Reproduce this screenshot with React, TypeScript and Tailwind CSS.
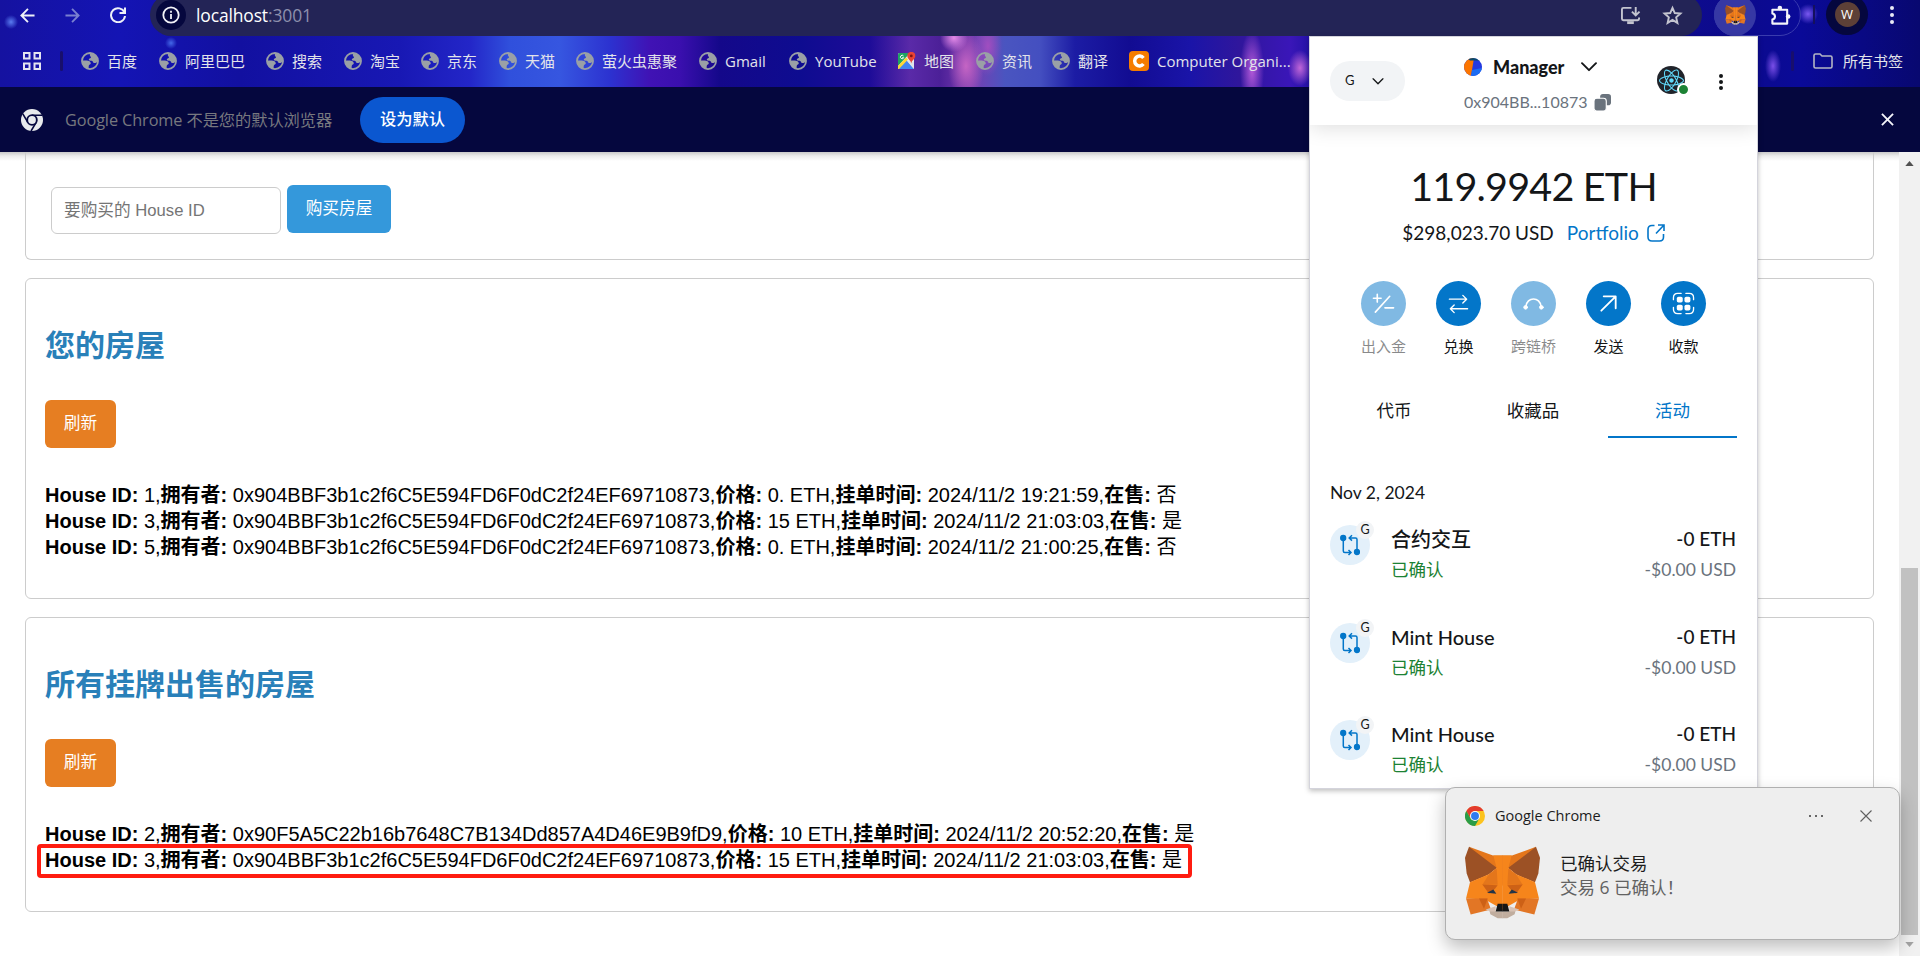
import React from "react";
import { FaReact } from "react-icons/fa";

const UI = "font-['Open_Sans','Noto_Sans_CJK_SC',sans-serif]";
const ARIAL = "font-['Liberation_Sans','Noto_Sans_CJK_SC',sans-serif]";
const GEO = "font-['Lato','Noto_Sans_CJK_SC',sans-serif]";

function Globe() {
  return (
    <svg viewBox="0 0 24 24" className="h-[18px] w-[18px] shrink-0" fill="#9aa0a6">
      <circle cx="12" cy="12" r="10.7" fill="none" stroke="#9aa0a6" strokeWidth="2.4" />
      <path d="M12 1.5C18 1.5 22.6 6 22.6 12c-1.600 2.600-3.600 3.200-5.400 2.600-1.700-.5-1-2.600-2.800-3-2-.3-4 .2-4-1.700 0-1.700 2.600-1 3-2.500.3-1.600-2.500-1.500-1.400-5.900z" />
      <path d="M1.500 11.200h6c3 0 5.600 1.600 5.600 3.800 0 2-2.600 1.600-2.800 3.600l-.3 3.900C5 21.500 1.500 17 1.500 11.200z" />
    </svg>
  );
}

function MapsIcon() {
  return (
    <svg viewBox="0 0 18 18" className="h-[18px] w-[18px] shrink-0">
      <rect x="0" y="1" width="16" height="16" rx="1.500" fill="#e8eaed" />
      <path d="M0 2.500Q0 1 1.500 1H12L0 14z" fill="#1fa463" />
      <path d="M0 17 8.500 8 16 17z" fill="#4285f4" />
      <path d="M0 14 8 5.500l2 2L1 17H0z" fill="#fdd835" />
      <path d="M9 9l7 8V10z" fill="#dfe3e8" />
      <path d="M13.300 11.500C13 8 9.300 7 9.300 3.900a4 4 0 0 1 8 0C17.300 7 13.600 8 13.300 11.500z" fill="#ea4335" />
      <circle cx="13.300" cy="3.900" r="1.400" fill="#811411" />
      <path d="M5.500 4a1.700 1.700 0 1 0 .2 1.700H4.200" fill="none" stroke="#fff" strokeWidth="1" />
    </svg>
  );
}

function Fox({ className }: { className: string }) {
  const half = (
    <g>
      <polygon points="12,2 84,28 113,28 113,120 95,66 60,90 15,108 30,60" fill="#e4761b" />
      <polygon points="12,2 95,65 72,84 15,108 5,82 0,35" fill="#9c5125" />
      <polygon points="15,108 72,84 95,66 85,28 113,28 113,190 60,160 3,157" fill="#f6851b" />
      <polygon points="95,66 72,84 52,116 98,116" fill="#e4761b" />
      <polygon points="52,115 98,117 90,128 72,143" fill="#cd6116" />
      <polygon points="3,157 66,157 78,190 17,205" fill="#e27625" />
      <polygon points="42,157 68,157 57,188" fill="#cd6116" />
      <polygon points="66,140 85,130 94,143" fill="#233447" />
      <polygon points="72,188 94,196 113,196 113,216 98,216 76,204" fill="#c0ad9e" />
      <polygon points="62,190 92,180 92,196 76,196" fill="#d7c1b3" />
      <polygon points="98,173 113,173 113,196 92,196" fill="#161616" />
    </g>
  );
  return (
    <svg viewBox="0 0 225 218" className={className}>
      {half}
      <g transform="translate(225 0) scale(-1 1)">{half}</g>
    </svg>
  );
}

function ChromeColor() {
  return (
    <svg viewBox="0 0 48 48" className="h-[20px] w-[20px]">
      <circle cx="24" cy="24" r="24" fill="#fcc31e" />
      <path d="M3.200 12A24 24 0 0 1 44.800 12H24L13.600 30z" fill="#e33b2e" />
      <path d="M3.200 12A24 24 0 0 0 24 48L34.400 30H13.600z" fill="#2a9c47" />
      <circle cx="24" cy="24" r="12" fill="#fff" />
      <circle cx="24" cy="24" r="9.500" fill="#2f7bf0" />
    </svg>
  );
}

function ChromeMono() {
  return (
    <svg viewBox="0 0 48 48" className="h-[22px] w-[22px]">
      <circle cx="24" cy="24" r="24" fill="#e8eaed" />
      <path d="M24 13.500H46M14.900 29.200 4 10.500M33.100 29.200 22 48" stroke="#05073e" strokeWidth="3.500" />
      <circle cx="24" cy="24" r="12.500" fill="#05073e" />
      <circle cx="24" cy="24" r="8.500" fill="#e8eaed" />
    </svg>
  );
}

const bookmarks: { label: string; width: string; kind?: string; tracking?: string }[] = [
  { label: "百度", width: "w-[78px]" },
  { label: "阿里巴巴", width: "w-[107px]" },
  { label: "搜索", width: "w-[78px]" },
  { label: "淘宝", width: "w-[77px]" },
  { label: "京东", width: "w-[78px]" },
  { label: "天猫", width: "w-[77px]" },
  { label: "萤火虫惠聚", width: "w-[123px]" },
  { label: "Gmail", width: "w-[90px]" },
  { label: "YouTube", width: "w-[109px]" },
  { label: "地图", width: "w-[78px]", kind: "maps" },
  { label: "资讯", width: "w-[76px]" },
  { label: "翻译", width: "w-[77px]" },
  { label: "Computer Organi...", width: "w-[180px]", kind: "c" },
];

function BrowserBar() {
  return (
    <header
      className={`${UI} h-[87px] shrink-0 overflow-hidden bg-[radial-gradient(circle_at_11px_22px,#5a7cf0_0,transparent_7px),radial-gradient(circle_at_171px_43px,#4468e8_0,transparent_6px),radial-gradient(circle_at_954px_38px,#e58be8_0,transparent_14px),radial-gradient(ellipse_18px_34px_at_966px_66px,#c565c4_0,transparent_100%),radial-gradient(ellipse_14px_30px_at_988px_46px,#a14ec0_0,transparent_100%),radial-gradient(ellipse_12px_40px_at_1252px_70px,#b45ad8_0,transparent_100%),radial-gradient(ellipse_12px_18px_at_1300px_68px,#c066d8_0,transparent_100%),radial-gradient(circle_at_1808px_14px,#7a58f0_0,transparent_10px),radial-gradient(ellipse_8px_16px_at_1773px_66px,#7a4fe8_0,transparent_100%),linear-gradient(90deg,#1512a0_0,#1414b4_120px,#1210a0_240px,#1818b4_400px,#2326c8_470px,#3050dc_510px,#3656e0_560px,#2c32d0_610px,#4012b4_650px,#3a0fae_680px,#14088a_720px,#0e0c90_800px,#1e0c98_870px,#5a2aa8_910px,#4c2098_940px,#7a3cb0_970px,#4a55c0_1005px,#444fc0_1040px,#1c1ca4_1075px,#120c92_1130px,#1a14a8_1190px,#30169c_1240px,#3a16b8_1290px,#1a10a0_1320px,#0c0a8c_1740px,#0a0a98_1800px,#080870_1920px)]`}
    >
      <div className="flex h-9 items-start">
        <div className="flex h-[30px] w-[150px] shrink-0 items-center pl-5">
          <svg viewBox="0 0 16 16" className="h-[15px] w-[15px]" fill="none" stroke="#eef0f8" strokeWidth="2">
            <path d="M15.500 8H1.500M8.500 1 1.500 8l7 7" />
          </svg>
          <svg viewBox="0 0 16 16" className="ml-[30px] h-[15px] w-[15px]" fill="none" stroke="#7a80d0" strokeWidth="2">
            <path d="M.5 8h14M7.500 1l7 7-7 7" />
          </svg>
          <svg viewBox="0 0 16 16" className="ml-[30px] h-4 w-4" fill="none" stroke="#eef0f8" strokeWidth="2">
            <path d="M14.500 5.500A7 7 0 1 0 15 9M15 .5v5.500H9.500" />
          </svg>
        </div>
        <div className="-mt-[6px] flex h-[42px] w-[1552px] shrink-0 items-center rounded-full bg-[#232456] pl-[6px]">
          <span className="flex h-[30px] w-[30px] items-center justify-center rounded-full bg-[#05073e]">
            <svg viewBox="0 0 18 18" className="h-[18px] w-[18px]" fill="none" stroke="#f2f2f8" strokeWidth="1.800">
              <circle cx="9" cy="9" r="7.700" />
              <path d="M9 8v5M9 4.800v1.900" />
            </svg>
          </span>
          <span className="ml-[10px] text-[17.500px] leading-6 tracking-[-0.15px] text-white">
            localhost<span className="text-[#8d8fac]">:3001</span>
          </span>
          <svg viewBox="0 0 22 20" className="ml-auto mr-[21px] h-[19px] w-[21px]" fill="none" stroke="#c3c4cf" strokeWidth="2">
            <path d="M12 2H3.500Q2 2 2 3.500v10Q2 15 3.500 15h15q1.500 0 1.500-1.500V12M16.500 1v8.500M12.500 6l4 4 4-4" />
            <path d="M7.500 17.500h7" strokeWidth="3" />
          </svg>
          <svg viewBox="0 0 24 24" className="mr-[19px] h-[21px] w-[21px]" fill="none" stroke="#c3c4cf" strokeWidth="2.200">
            <path d="M12 3.200l2.600 6 6.500.6-4.900 4.300 1.400 6.400-5.600-3.400-5.600 3.400 1.400-6.400-4.900-4.300 6.500-.6z" />
          </svg>
        </div>
        <div className="-mt-[6px] ml-3 flex h-[42px] w-[87px] shrink-0 items-center rounded-full border border-[#3a3cae]">
          <span className="-ml-px flex h-[42px] w-[42px] items-center justify-center rounded-full bg-[#3638a4]">
            <Fox className="h-5 w-[21px]" />
          </span>
          <svg viewBox="0 0 21 22" className="ml-[14px] h-[21px] w-[21px] shrink-0" fill="#f4f4fa">
            <path
              d="M2 5h15.500v14.500H2v-4.200c3.600-.8 3.600-5.600 0-6.300z"
              fill="none"
              stroke="#f4f4fa"
              strokeWidth="2.200"
              strokeLinejoin="round"
            />
            <circle cx="9.800" cy="3.200" r="2.400" />
            <circle cx="18.500" cy="12" r="2.400" />
          </svg>
        </div>
        <div className="ml-3 mt-[5px] h-[19px] w-[2px] bg-[#14105e]" />
        <div className="-mt-[6px] ml-[11px] flex h-[41px] w-[42px] shrink-0 items-center justify-center rounded-full bg-[#05073e]">
          <span className="flex h-[25px] w-[25px] items-center justify-center rounded-full bg-[#5d4037] text-[13px] leading-none text-white">
            W
          </span>
        </div>
        <div className="ml-[22px] mt-[6px] flex flex-col gap-[3px]">
          <i className="h-1 w-1 rounded-full bg-[#e8eaf6]" />
          <i className="h-1 w-1 rounded-full bg-[#e8eaf6]" />
          <i className="h-1 w-1 rounded-full bg-[#e8eaf6]" />
        </div>
      </div>

      <div className="flex h-[51px] items-center pb-px">
        <svg viewBox="0 0 18 18" className="ml-[23px] h-[18px] w-[18px]" fill="none" stroke="#e4e4f0" strokeWidth="2">
          <path d="M1 1h5.500v5.500H1zM11.500 1H17v5.500h-5.500zM1 11.500h5.500V17H1zM11.500 11.500H17V17h-5.500z" />
        </svg>
        <div className="ml-[19px] mr-[18px] h-5 w-[3px] rounded bg-[#180f6c]" />
        {bookmarks.map((b) => (
          <div key={b.label} className={`${b.width} flex shrink-0 items-center gap-2 text-[15px] leading-5 text-[#e2e3ea]`}>
            {b.kind === "maps" ? (
              <MapsIcon />
            ) : b.kind === "c" ? (
              <span className="flex h-[20px] w-[20px] shrink-0 items-center justify-center rounded bg-[#f57c00]">
                <svg viewBox="0 0 12 12" className="h-[14px] w-[14px]" fill="none" stroke="#fff" strokeWidth="3">
                  <path d="M9.800 3.400A4.200 4.200 0 1 0 9.800 8.600" />
                </svg>
              </span>
            ) : (
              <Globe />
            )}
            <span className="whitespace-nowrap">{b.label}</span>
          </div>
        ))}
        <div className="ml-auto h-5 w-[3px] rounded bg-[#180f6c]" />
        <svg viewBox="0 0 20 16" className="ml-[19px] h-4 w-5" fill="none" stroke="#b4b6c4" strokeWidth="1.600">
          <path d="M1 2.500Q1 1 2.500 1H7l2 2h8.500Q19 3 19 4.500v9q0 1.500-1.500 1.500h-15Q1 15 1 13.500z" />
        </svg>
        <span className="ml-[10px] mr-[17px] text-[15px] leading-5 text-[#e2e3ea]">所有书签</span>
      </div>
    </header>
  );
}

function InfoBar() {
  return (
    <div className={`${UI} flex h-[65px] shrink-0 items-center bg-[#05073e] pl-[21px] pr-[26px]`}>
      <ChromeMono />
      <span className="ml-[22px] w-[295px] whitespace-nowrap text-[16.300px] leading-6 tracking-[-0.1px] text-[#77787f]">
        Google Chrome 不是您的默认浏览器
      </span>
      <span className="flex h-[46px] w-[105px] items-center justify-center rounded-full bg-[#0b57d0] text-[16.300px] font-medium text-white">
        设为默认
      </span>
      <svg viewBox="0 0 14 14" className="ml-auto h-[13px] w-[13px]" fill="none" stroke="#f4f4fa" strokeWidth="2">
        <path d="M1 1l12 12M13 1 1 13" />
      </svg>
    </div>
  );
}

interface House {
  id: number;
  owner: string;
  price: string;
  time: string;
  sale: string;
}

const A = "0x904BBF3b1c2f6C5E594FD6F0dC2f24EF69710873";

const myHouses: House[] = [
  { id: 1, owner: A, price: "0.", time: "2024/11/2 19:21:59", sale: "否" },
  { id: 3, owner: A, price: "15", time: "2024/11/2 21:03:03", sale: "是" },
  { id: 5, owner: A, price: "0.", time: "2024/11/2 21:00:25", sale: "否" },
];

const listed: House[] = [
  { id: 2, owner: "0x90F5A5C22b16b7648C7B134Dd857A4D46E9B9fD9", price: "10", time: "2024/11/2 20:52:20", sale: "是" },
  { id: 3, owner: A, price: "15", time: "2024/11/2 21:03:03", sale: "是" },
];

function HouseRow({ h, marked }: { h: House; marked?: boolean }) {
  return (
    <li className="relative h-[26px] whitespace-nowrap text-[20px] leading-[26px] text-black">
      <b>House ID:</b> {h.id},<b>拥有者:</b> {h.owner},<b>价格:</b> {h.price} ETH,<b>挂单时间:</b> {h.time},<b>在售:</b> {h.sale}
      {marked && <span className="absolute -left-[8px] -top-[3px] h-[34px] w-[1155px] rounded-[4px] border-4 border-[#ff1c10]" />}
    </li>
  );
}

function HouseCard({ title, houses, height, markLast }: { title: string; houses: House[]; height: string; markLast?: boolean }) {
  return (
    <section className={`${height} flex shrink-0 flex-col items-start rounded-[6px] border border-[#ccc] pl-[19px]`}>
      <h2 className="mt-[47px] text-[30px] font-bold leading-[40px] text-[#2980b9]">{title}</h2>
      <button className="mt-[34px] h-12 w-[71px] rounded-[6px] bg-[#e67e22] text-[16.670px] leading-none text-white">刷新</button>
      <ul className="mt-[34px]">
        {houses.map((h, i) => (
          <HouseRow key={h.id} h={h} marked={markLast && i === houses.length - 1} />
        ))}
      </ul>
    </section>
  );
}

function Page() {
  return (
    <main className={`${ARIAL} flex min-h-0 flex-1 bg-white`}>
      <div className="flex min-w-0 flex-1 flex-col gap-[18px] bg-[linear-gradient(180deg,#c9c9c9_0,#ececec_4px,#fff_9px)] pl-[25px] pr-[25px]">
        <section className="flex h-[108px] shrink-0 items-start rounded-b-[6px] border border-t-0 border-[#ccc] pl-[25px] pt-[33px]">
          <div className="mt-[2px] flex h-[47px] w-[230px] items-center rounded-[6px] border border-[#ccc] pl-3 text-[16.670px] text-[#757575]">
            要购买的 House ID
          </div>
          <button className="ml-[6px] h-12 w-[104px] rounded-[6px] bg-[#3498db] text-[16.670px] leading-none text-white">购买房屋</button>
        </section>
        <HouseCard title="您的房屋" houses={myHouses} height="h-[321px]" />
        <HouseCard title="所有挂牌出售的房屋" houses={listed} height="h-[295px]" markLast />
      </div>
      <div className="flex w-[21px] flex-col items-center bg-[#f1f1f1]">
        <svg viewBox="0 0 10 6" className="mt-[9px] h-[5px] w-[9px] shrink-0">
          <path d="M5 0l5 6H0z" fill="#505050" />
        </svg>
        <div className="mt-[402px] h-[367px] w-[17px] shrink-0 bg-[#c1c1c1]" />
        <svg viewBox="0 0 10 6" className="mt-[7px] h-[5px] w-[9px] shrink-0">
          <path d="M5 6l5-6H0z" fill="#a3a3a3" />
        </svg>
      </div>
    </main>
  );
}

function Chevron({ className }: { className: string }) {
  return (
    <svg viewBox="0 0 16 10" className={className} fill="none" stroke="#141618" strokeWidth="1.900" strokeLinecap="round" strokeLinejoin="round">
      <path d="M1 1.200l7 7 7-7" />
    </svg>
  );
}

const actions: { label: string; off?: boolean; icon: React.ReactNode }[] = [
  {
    label: "出入金",
    off: true,
    icon: <path d="M1.500 6.500h8M5.500 2.500v8M3.500 21 18.500 4.500M13.500 16.500h9" strokeWidth="1.700" />,
  },
  {
    label: "兑换",
    icon: <path d="M2.500 7.500h18M16.500 3.500l4 4-4 4M21.500 17.500h-18M7.500 13.500l-4 4 4 4" strokeWidth="1.400" />,
  },
  {
    label: "跨链桥",
    off: true,
    icon: (
      <>
        <path d="M4 15.500c1-11 15-11 16 0" strokeWidth="1.700" />
        <circle cx="3.800" cy="16" r="1.900" fill="#fff" />
        <circle cx="20.200" cy="16" r="1.900" fill="#fff" />
      </>
    ),
  },
  { label: "发送", icon: <path d="M4.500 19.500 19 5M7 4.500h12.500V17" strokeWidth="1.900" /> },
  {
    label: "收款",
    icon: (
      <>
        <path d="M1.500 8V6Q1.500 1.500 6 1.500h3.500M14.500 1.500H18q4.500 0 4.500 4.500v2M1.500 16v2q0 4.500 4.500 4.500h3.500M14.500 22.500H18q4.500 0 4.500-4.500v-2" strokeWidth="1.400" />
        <g fill="#fff" stroke="none">
          <rect x="5" y="5" width="6.200" height="6" rx="1.800" />
          <rect x="13" y="5" width="6.200" height="6" rx="1.800" />
          <rect x="5" y="13.200" width="6.200" height="6" rx="1.800" />
          <rect x="13" y="13.200" width="6.200" height="6" rx="1.800" />
        </g>
      </>
    ),
  },
];

function Activity({ title, height }: { title: string; height: string }) {
  return (
    <div className={`${height} flex shrink-0 items-start`}>
      <span className="relative mt-[11px] flex h-10 w-10 shrink-0 items-center justify-center rounded-full bg-[#e3f0fa]">
        <svg viewBox="0 0 20 22" className="h-[22px] w-5" fill="none" stroke="#0376c9" strokeWidth="1.500">
          <path d="M3.300 5v12q0 1.500 1.500 1.500h6M8.500 16l2.500 2.500-2.500 2.500M17 16V5.500Q17 4 15.500 4h-6M12 1.200 9.200 4l2.800 2.600" />
          <circle cx="3.200" cy="4" r="2.400" fill="#0376c9" />
          <circle cx="17" cy="18" r="2.400" fill="#0376c9" />
        </svg>
        <span className="absolute -right-[4px] -top-[4px] flex h-[18px] w-[18px] items-center justify-center rounded-full bg-[#f2f4f6] text-[12.500px] leading-none text-[#141618]">
          G
        </span>
      </span>
      <span className="ml-[21px] flex flex-col pt-[11px]">
        <span className="text-[20px] font-medium leading-7 text-[#141618]">{title}</span>
        <span className="mt-[3px] text-[17.500px] leading-7 text-[#1c8234]">已确认</span>
      </span>
      <span className="ml-auto flex flex-col items-end pt-[11px]">
        <span className="text-[19px] font-medium leading-7 text-[#141618]">-0 ETH</span>
        <span className="mt-[3px] text-[17.500px] leading-7 text-[#6a737d]">-$0.00 USD</span>
      </span>
    </div>
  );
}

function Wallet() {
  return (
    <aside
      className={`${GEO} absolute left-[1309px] top-9 flex h-[753px] w-[449px] flex-col overflow-hidden border border-[#d4d4dc] bg-white shadow-[0_2px_5px_rgba(0,0,0,0.25)]`}
    >
      <div className="flex h-[88px] shrink-0 items-start pl-[20px] shadow-[0_2px_20px_rgba(0,0,0,0.14)]">
        <span className="mt-6 flex h-10 w-[75px] shrink-0 items-center rounded-full bg-[#f2f4f6] pl-[15px] text-[13px] text-[#141618]">
          G<Chevron className="ml-[17px] h-[7px] w-[12px]" />
        </span>
        <div className="ml-[59px] w-[174px] shrink-0">
          <div className="mt-[18px] flex h-6 items-center">
            <svg viewBox="0 0 18 18" className="h-[18px] w-[18px] rounded-full">
              <rect width="18" height="18" fill="#2439e0" />
              <path d="M0 0h10L7 18H0z" fill="#fc7500" />
              <path d="M3 0h15v2.500H6z" fill="#0b4a6a" />
              <path d="M8 12l10-2v8H7z" fill="#1c6cf2" />
            </svg>
            <span className="ml-[11px] text-[18px] font-black leading-6 text-[#141618]">Manager</span>
            <Chevron className="ml-[17px] h-[10px] w-4" />
          </div>
          <div className="mt-[11px] flex h-6 items-center text-[16px] leading-6 text-[#6a737d]">
            0x904BB...10873
            <svg viewBox="0 0 18 18" className="ml-[6px] h-[17px] w-[17px]" fill="#6a737d">
              <rect x="6.500" y="0" width="11.500" height="12" rx="3" />
              <rect x="0" y="4.500" width="13" height="13.500" rx="3" stroke="#fff" strokeWidth="1.200" />
            </svg>
          </div>
        </div>
        <span className="relative ml-[19px] mt-[29px] flex h-7 w-7 shrink-0 items-center justify-center rounded-full bg-[#20232a] text-[#61dafb]">
          <FaReact size={25} />
          <i className="absolute -bottom-[2px] -right-[5px] h-[13px] w-[13px] rounded-full border-2 border-white bg-[#1c8234]" />
        </span>
        <span className="ml-[34px] mt-[37px] flex flex-col gap-[2px]">
          <i className="h-[4px] w-[4px] rounded-full bg-[#141618]" />
          <i className="h-[4px] w-[4px] rounded-full bg-[#141618]" />
          <i className="h-[4px] w-[4px] rounded-full bg-[#141618]" />
        </span>
      </div>

      <div className="mt-[37px] flex h-12 shrink-0 items-center justify-center whitespace-nowrap text-[39.500px] leading-[48px] tracking-[-0.8px] text-[#141618]">
        119.9942 ETH
      </div>
      <div className="mt-[9px] flex h-7 shrink-0 items-center justify-center text-[19px] leading-7">
        <span className="text-[#141618]">$298,023.70 USD</span>
        <span className="ml-[13px] text-[#0376c9]">Portfolio</span>
        <svg viewBox="0 0 18 18" className="ml-2 h-[18px] w-[18px]" fill="none" stroke="#0376c9" strokeWidth="1.600">
          <path d="M7.500 1.500H5Q1 1.500 1 5.500v7.500q0 4 4 4h7.500q4 0 4-4v-3M11 1h6v6M17 1 9 9.500" />
        </svg>
      </div>

      <div className="mt-[34px] flex shrink-0 justify-center">
        {actions.map((a) => (
          <div key={a.label} className={`${a.off ? "opacity-50" : ""} flex w-[75px] flex-col items-center`}>
            <span className="flex h-[45px] w-[45px] items-center justify-center rounded-full bg-[#0376c9]">
              <svg viewBox="0 0 24 24" className="h-[23px] w-[23px]" fill="none" stroke="#fff" strokeLinecap="round" strokeLinejoin="round">
                {a.icon}
              </svg>
            </span>
            <span className="mt-[8px] text-[15px] leading-6 text-[#141618]">{a.label}</span>
          </div>
        ))}
      </div>

      <div className="mt-[28px] flex h-[52px] shrink-0 gap-[11px] pl-[20px] text-center text-[17.500px] leading-[50px] text-[#141618]">
        <span className="w-[128px]">代币</span>
        <span className="w-[128px]">收藏品</span>
        <span className="w-[129px] border-b-2 border-[#0376c9] text-[#0376c9]">活动</span>
      </div>

      <div className="mt-[41px] flex flex-col pl-[20px] pr-[21px]">
        <span className="text-[17.500px] leading-7 text-[#141618]">Nov 2, 2024</span>
        <div className="mt-[7px] flex flex-col">
          <Activity title="合约交互" height="h-[98px]" />
          <Activity title="Mint House" height="h-[97px]" />
          <Activity title="Mint House" height="h-[80px]" />
        </div>
      </div>
    </aside>
  );
}

function Toast() {
  return (
    <div
      className={`${UI} absolute left-[1445px] top-[787px] flex h-[153px] w-[455px] flex-col rounded-[10px] border border-[#b0b0b0] bg-[#eeeeee] pl-[19px] shadow-[0_8px_18px_rgba(0,0,0,0.25)]`}
    >
      <div className="mt-[18px] flex h-5 items-center">
        <ChromeColor />
        <span className="ml-[10px] text-[14.500px] leading-5 text-[#1c1c1c]">Google Chrome</span>
        <span className="ml-auto flex gap-[4px]">
          <i className="h-[2px] w-[2px] bg-[#666]" />
          <i className="h-[2px] w-[2px] bg-[#666]" />
          <i className="h-[2px] w-[2px] bg-[#666]" />
        </span>
        <svg viewBox="0 0 12 12" className="ml-[37px] mr-[27px] h-3 w-3" fill="none" stroke="#5f5f5f" strokeWidth="1.100">
          <path d="M.5.5l11 11M11.500.5l-11 11" />
        </svg>
      </div>
      <div className="mt-[20px] flex">
        <Fox className="h-[73px] w-[75px]" />
        <div className="ml-5 mt-[5px] flex flex-col text-[17.500px] leading-6">
          <span className="text-[#1c1c1c]">已确认交易</span>
          <span className="text-[#626262]">交易 6 已确认！</span>
        </div>
      </div>
    </div>
  );
}

export default function App() {
  return (
    <div className="relative flex h-[956px] w-[1920px] flex-col overflow-hidden bg-white">
      <BrowserBar />
      <InfoBar />
      <Page />
      <Wallet />
      <Toast />
    </div>
  );
}
